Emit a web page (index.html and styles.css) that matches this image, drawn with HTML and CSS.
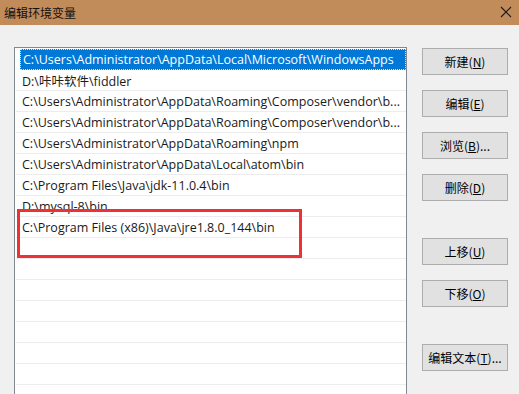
FILE: index.html
```html
<!DOCTYPE html>
<html lang="zh-CN">
<head>
    <meta charset="UTF-8">
    <title>编辑环境变量</title>
    <link rel="stylesheet" href="styles.css">
</head>
<body>

<div class="titlebar">
    <span class="title">编辑环境变量</span>
    <svg class="close" width="12" height="12" viewBox="0 0 12 12">
        <path d="M1 1 L11 11 M11 1 L1 11" stroke="#1a1a1a" stroke-width="1.1" fill="none"/>
    </svg>
</div>

<div class="content">
    <div class="listbox">
        <div class="row selected"><span>C:\Users\Administrator\AppData\Local\Microsoft\WindowsApps</span></div>
        <div class="row"><span>D:\咔咔软件\fiddler</span></div>
        <div class="row"><span>C:\Users\Administrator\AppData\Roaming\Composer\vendor\b...</span></div>
        <div class="row"><span>C:\Users\Administrator\AppData\Roaming\Composer\vendor\b...</span></div>
        <div class="row"><span>C:\Users\Administrator\AppData\Roaming\npm</span></div>
        <div class="row"><span>C:\Users\Administrator\AppData\Local\atom\bin</span></div>
        <div class="row"><span>C:\Program Files\Java\jdk-11.0.4\bin</span></div>
        <div class="row"><span>D:\mysql-8\bin</span></div>
        <div class="row"><span>C:\Program Files (x86)\Java\jre1.8.0_144\bin</span></div>
        <div class="row"></div>
        <div class="row"></div>
        <div class="row"></div>
        <div class="row"></div>
        <div class="row"></div>
        <div class="row"></div>
        <div class="row"></div>
        <div class="row"></div>
        <div class="highlight"></div>
    </div>

    <div class="buttons">
        <button class="btn">新建(<u>N</u>)</button>
        <button class="btn">编辑(<u>E</u>)</button>
        <button class="btn">浏览(<u>B</u>)...</button>
        <button class="btn">删除(<u>D</u>)</button>
        <button class="btn group">上移(<u>U</u>)</button>
        <button class="btn">下移(<u>O</u>)</button>
        <button class="btn group">编辑文本(<u>T</u>)...</button>
    </div>
</div>

</body>
</html>
```

FILE: styles.css
```css
body {
    margin: 0;
    height: 394px;
    overflow: hidden;
    background-color: #f0f0f0;
    font-family: "Open Sans", "Noto Sans CJK SC", sans-serif;
    font-size: 12.5px;
    color: #000;
}

.titlebar {
    height: 25px;
    background-color: #c18c5a;
    display: flex;
    align-items: center;
    justify-content: space-between;
    padding: 0 7px 0 4px;
}

.title {
    font-family: "Noto Sans CJK SC", sans-serif;
    font-size: 12px;
    color: #111;
}

.close {
    margin-top: -2px;
}

.content {
    display: flex;
    align-items: flex-start;
    padding: 22px 0 0 14px;
}

.listbox {
    position: relative;
    width: 390px;
    height: 360px;
    border: 1px solid #828790;
    border-bottom: none;
    background-color: #fff;
    padding: 1px 0 0 1px;
    box-sizing: content-box;
}

.row {
    height: 20px;
    border-bottom: 1px solid #ececec;
    padding-left: 4px;
    display: flex;
    align-items: center;
    white-space: nowrap;
    overflow: hidden;
    color: #1a1a1a;
}

.row span {
    padding-left: 2px;
}

.row.selected {
    background-color: #0078d7;
    color: #fff;
    margin-left: 4px;
    padding-left: 0;
    height: 19px;
    border: 1px dotted #cde5f7;
    border-bottom: 1px dotted #cde5f7;
}

.highlight {
    position: absolute;
    left: 2px;
    top: 161px;
    width: 279px;
    height: 43px;
    border: 3px solid #ec3237;
}

.buttons {
    display: flex;
    flex-direction: column;
    margin-left: 15px;
    margin-top: 1px;
}

.btn {
    width: 86px;
    height: 27px;
    margin-bottom: 15px;
    background-color: #e1e1e1;
    border: 1px solid #adadad;
    font-family: "Noto Sans CJK SC", sans-serif;
    font-size: 12px;
    color: #000;
    padding: 0;
}

.btn.group {
    margin-top: 22px;
}
```
